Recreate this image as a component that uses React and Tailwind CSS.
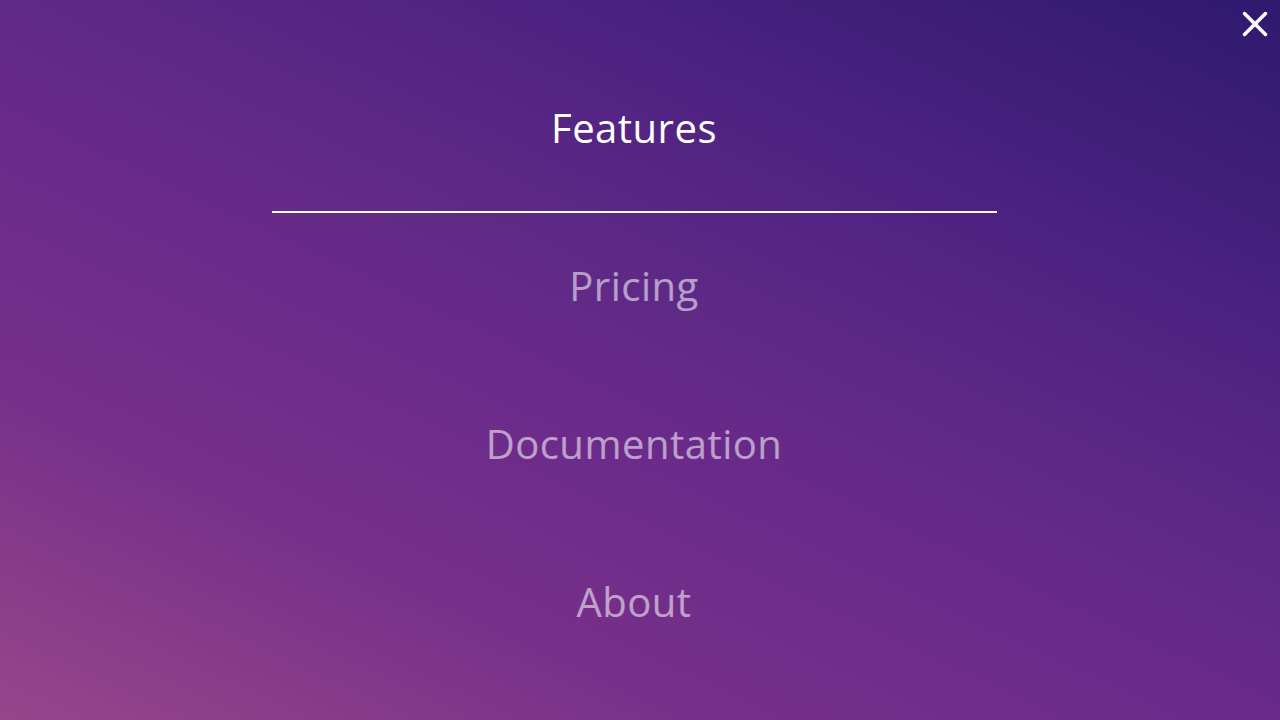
import { useState } from 'react'

const links = ['Features', 'Pricing', 'Documentation', 'About']

function CloseIcon() {
  return (
    <svg width="26" height="26" viewBox="0 0 26 26" fill="none" stroke="white" strokeWidth="3.5" strokeLinecap="round">
      <path d="M2.5 2.5 23.5 23.5" />
      <path d="M23.5 2.5 2.5 23.5" />
    </svg>
  )
}

export default function App() {
  const [active, setActive] = useState('Features')

  return (
    <div
      className="relative h-[720px] w-[1280px] overflow-hidden bg-[linear-gradient(25deg,#96468a_0%,#77308a_25%,#6a2a8a_45%,#5f2a86_55%,#4c2182_75%,#2e1a6e_100%)]"
      style={{ fontFamily: '"Open Sans", "Noto Sans", sans-serif' }}
    >
      {/* close button */}
      <button className="absolute right-[12px] top-[11px] p-0">
        <CloseIcon />
      </button>

      <nav className="flex flex-col items-center pr-3 pt-[100px]">
        {links.map((name, i) => (
          <div key={name} className="flex flex-col items-center">
            <a
              href="#"
              onClick={(e) => {
                e.preventDefault()
                setActive(name)
              }}
              className={
                'block h-[56px] text-[40px] leading-[56px] tracking-[0.5px] ' +
                (active === name ? 'text-white' : 'text-white/55')
              }
            >
              {name}
            </a>
            {i === 0 && <div className="mb-[45px] mt-[55px] h-[2px] w-[725px] bg-white" />}
            {i > 0 && i < links.length - 1 && <div className="h-[102px]" />}
          </div>
        ))}
      </nav>
    </div>
  )
}
